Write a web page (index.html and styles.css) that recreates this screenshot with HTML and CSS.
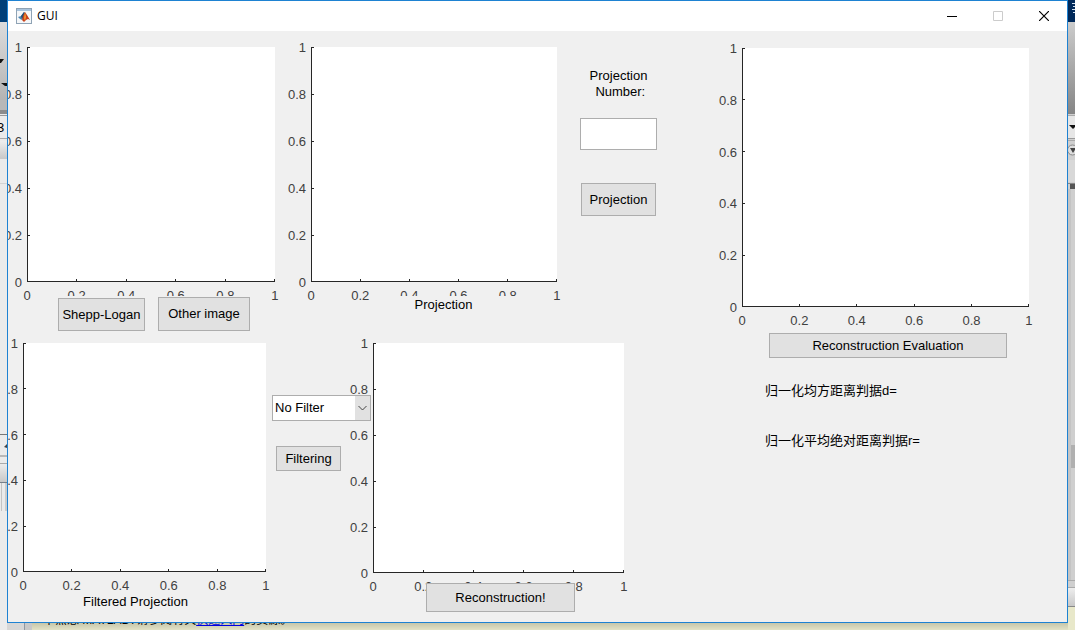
FILE: index.html
```html
<!DOCTYPE html>
<html lang="en">
<head>
<meta charset="utf-8">
<title>GUI</title>
<link rel="stylesheet" href="styles.css">
</head>
<body>
<div class="desktop">
  <svg class="edge" viewBox="0 0 7 630" preserveAspectRatio="xMinYMin slice" aria-hidden="true">
    <defs>
      <linearGradient id="lg" x1="0" y1="0" x2="0" y2="1"><stop offset="0" stop-color="#dcdcdc"/><stop offset="1" stop-color="#b4b4b4"/></linearGradient>
      <linearGradient id="lg2" x1="0" y1="0" x2="0" y2="1"><stop offset="0" stop-color="#eeeeee"/><stop offset="1" stop-color="#c8c8c8"/></linearGradient>
    </defs>
    <rect width="7" height="630" fill="#ebebeb"/>
    <rect width="7" height="22" fill="#003f78"/>
    <rect y="22" width="7" height="78" fill="url(#lg)"/>
    <path d="M0 59h4l-3 4h-1zM1 83h6v3h-2z" fill="#111"/>
    <rect y="100" width="7" height="10" fill="#b8b8b8"/>
    <rect y="110" width="7" height="4" fill="#8c8c8c"/>
    <rect y="115" width="7" height="1" fill="#999"/>
    <text x="-3" y="132" class="edge-text">3</text>
    <rect y="138" width="7" height="1" fill="#aaa"/>
    <rect y="141" width="7" height="18" fill="url(#lg2)"/>
    <rect y="183" width="7" height="1" fill="#d4d4d4"/>
    <rect y="434" width="7" height="1" fill="#777"/>
    <path d="M4 447l3-3v4z" fill="#444"/>
    <rect y="455" width="7" height="2" fill="#b8b8b8"/>
    <rect y="463" width="7" height="19" fill="url(#lg2)"/>
    <rect y="463" width="7" height="1" fill="#aaa"/>
    <rect y="482" width="7" height="1" fill="#777f88"/>
    <rect x="1" y="483" width="1" height="28" fill="#c4c4c4"/>
    <rect x="5" y="483" width="2" height="28" fill="#ccc"/>
  </svg>

  <main class="window">
    <header class="titlebar">
      <svg class="logo" width="16" height="16" viewBox="0 0 16 16" aria-hidden="true">
        <rect x=".5" y=".5" width="15" height="15" fill="#f5f7f9" stroke="#8fa3b5"/>
        <rect x="1" y="1" width="14" height="2" fill="#a9c4dd"/>
        <path d="M2 9l3-1 3-4 1 2-3 6-2-1z" fill="#4b86b4"/>
        <path d="M5 8l3-4 1 1-2 5-1 1z" fill="#254d72"/>
        <path d="M6 12l1-4 2-4 2 3 3 5-2-1-2 1-2 2z" fill="#c8401c"/>
        <path d="M9 4l1 5-1 4-1-3z" fill="#f09a32"/>
      </svg>
      <h1 class="title">GUI</h1>
      <button class="caption" aria-label="Minimize"><svg width="10" height="10"><path d="M0 5.5h10" stroke="#000"/></svg></button>
      <button class="caption" aria-label="Maximize" disabled><svg width="10" height="10"><path d="M.5.5h9v9h-9z" fill="none" stroke="#ccc"/></svg></button>
      <button class="caption" aria-label="Close"><svg width="10" height="10"><path d="M0 0l10 10M10 0L0 10" stroke="#000" stroke-width="1.2"/></svg></button>
    </header>

    <div class="content">
      <div class="workspace">
        <section class="row row-source">
          <div class="panel panel-image">
            <div class="axes">
              <svg class="frame" width="100%" height="100%"><use href="#ticks"/></svg>
              <div class="y-labels"><span>1</span><span>0.8</span><span>0.6</span><span>0.4</span><span>0.2</span><span>0</span></div>
              <div class="x-labels"><span>0</span><span>0.2</span><span>0.4</span><span>0.6</span><span>0.8</span><span>1</span></div>
            </div>
            <div class="under">
              <div class="image-buttons">
                <button class="btn shepp">Shepp-Logan</button>
                <button class="btn other">Other image</button>
              </div>
            </div>
          </div>
          <div class="panel panel-projection">
            <div class="axes">
              <svg class="frame" width="100%" height="100%"><use href="#ticks"/></svg>
              <div class="y-labels"><span>1</span><span>0.8</span><span>0.6</span><span>0.4</span><span>0.2</span><span>0</span></div>
              <div class="x-labels"><span>0</span><span>0.2</span><span>0.4</span><span>0.6</span><span>0.8</span><span>1</span></div>
            </div>
            <div class="under"><p class="caption-text projection-caption">Projection</p></div>
          </div>
          <div class="number-form">
            <label for="count">Projection<br>&nbsp;Number:</label>
            <input id="count" type="text">
            <button class="btn project">Projection</button>
          </div>
        </section>

        <section class="row row-filter">
          <div class="panel panel-filtered">
            <div class="axes">
              <svg class="frame" width="100%" height="100%"><use href="#ticks"/></svg>
              <div class="y-labels"><span>1</span><span>0.8</span><span>0.6</span><span>0.4</span><span>0.2</span><span>0</span></div>
              <div class="x-labels"><span>0</span><span>0.2</span><span>0.4</span><span>0.6</span><span>0.8</span><span>1</span></div>
            </div>
            <div class="under under-filtered"><p class="caption-text filtered-caption">Filtered Projection</p></div>
          </div>
          <div class="filter-form">
            <div class="select-box">
              <select aria-label="Filter"><option>No Filter</option></select>
              <svg class="chevron" width="15" height="24" aria-hidden="true"><path d="M3.5 10l4 4 4-4" fill="none" stroke="#444"/></svg>
            </div>
            <button class="btn filtering">Filtering</button>
          </div>
          <div class="panel panel-recon">
            <div class="axes">
              <svg class="frame" width="100%" height="100%"><use href="#ticks"/></svg>
              <div class="y-labels"><span>1</span><span>0.8</span><span>0.6</span><span>0.4</span><span>0.2</span><span>0</span></div>
              <div class="x-labels"><span>0</span><span>0.2</span><span>0.4</span><span>0.6</span><span>0.8</span><span>1</span></div>
            </div>
            <div class="under under-recon"><button class="btn recon">Reconstruction!</button></div>
          </div>
        </section>
      </div>

      <section class="evaluation">
        <div class="axes">
          <svg class="frame" width="100%" height="100%">
            <g id="ticks" stroke="#262626" stroke-width="2" shape-rendering="crispEdges">
              <path d="M0 0v2000"/>
              <line x1="0" x2="100%" y1="100%" y2="100%"/>
              <path d="M0 0h3"/>
              <line x1="0" x2="3" y1="20%" y2="20%" stroke-width="1"/>
              <line x1="0" x2="3" y1="40%" y2="40%" stroke-width="1"/>
              <line x1="0" x2="3" y1="60%" y2="60%" stroke-width="1"/>
              <line x1="0" x2="3" y1="80%" y2="80%" stroke-width="1"/>
              <svg y="100%" width="100%" height="3" overflow="visible">
                <line x1="20%" x2="20%" y1="-3" y2="0" stroke-width="1"/>
                <line x1="40%" x2="40%" y1="-3" y2="0" stroke-width="1"/>
                <line x1="60%" x2="60%" y1="-3" y2="0" stroke-width="1"/>
                <line x1="80%" x2="80%" y1="-3" y2="0" stroke-width="1"/>
                <line x1="100%" x2="100%" y1="-3" y2="0"/>
              </svg>
            </g>
          </svg>
          <div class="y-labels"><span>1</span><span>0.8</span><span>0.6</span><span>0.4</span><span>0.2</span><span>0</span></div>
          <div class="x-labels"><span>0</span><span>0.2</span><span>0.4</span><span>0.6</span><span>0.8</span><span>1</span></div>
        </div>
        <button class="btn evaluate">Reconstruction Evaluation</button>
        <p class="metric" lang="zh">归一化均方距离判据d=</p>
        <p class="metric" lang="zh">归一化平均绝对距离判据r=</p>
      </section>
    </div>
  </main>

  <div class="notice" lang="zh"><p>不熟悉 MATLAB?请参阅有关<a href="#start">快速入门</a>的资源。</p></div>

  <svg class="edge" viewBox="0 0 7 630" preserveAspectRatio="xMinYMin slice" aria-hidden="true">
    <defs>
      <linearGradient id="rg" x1="0" y1="0" x2="0" y2="1"><stop offset="0" stop-color="#cccccc"/><stop offset="1" stop-color="#858585"/></linearGradient>
    </defs>
    <rect width="7" height="630" fill="#cfcfcf"/>
    <rect width="7" height="22" fill="#00295a"/>
    <path d="M4 3.500h3M5 6.500h2M4 9.500h3M5 12.500h2" stroke="#cfdff0"/>
    <rect y="22" width="7" height="92" fill="url(#rg)"/>
    <rect y="115" width="7" height="1" fill="#aaa"/>
    <rect y="116" width="7" height="22" fill="#e6e6e6"/>
    <path d="M1 125h6v2l-2 2z" fill="#111"/>
    <rect y="138" width="7" height="1" fill="#999"/>
    <rect y="140" width="7" height="1" fill="#aaa"/>
    <circle cx="4.500" cy="150" r="5" fill="#ddd" stroke="#888"/>
    <path d="M2 148h6l-3 5z" fill="#444"/>
    <rect y="160" width="7" height="22" fill="#d8d8d8"/>
    <rect y="183" width="7" height="1" fill="#888"/>
    <rect x="2" y="184" width="5" height="5" fill="#555"/>
    <rect y="189" width="3" height="391" fill="#c4c4c4"/>
    <rect x="3" y="445" width="4" height="23" fill="#b0b0b0"/>
    <rect y="580" width="7" height="1" fill="#aaa"/>
    <rect y="587" width="7" height="1" fill="#aaa"/>
    <rect y="588" width="7" height="18" fill="url(#lg2)"/>
    <rect y="606" width="7" height="1" fill="#888"/>
    <rect y="607" width="7" height="23" fill="#e8e8ca"/>
  </svg>
</div>
</body>
</html>
```

FILE: styles.css
```css
* {
  box-sizing: border-box;
}

body {
  margin: 0;
  font: 13px/16px "Liberation Sans", "Noto Sans CJK SC", sans-serif;
  color: #000;
}

h1, p {
  margin: 0;
  font-weight: normal;
}

button, input, select {
  font: inherit;
  color: inherit;
}

/* Desktop behind the window */
.desktop {
  display: grid;
  grid-template-columns: 7px minmax(0, 1fr) 7px;
  grid-template-rows: 1fr 7px;
  min-height: 100vh;
}

.edge {
  display: block;
  width: 7px;
  height: 100%;
  grid-row: 1 / 3;
}

.edge:first-child {
  grid-column: 1;
}

.edge:last-child {
  grid-column: 3;
}

.edge-text {
  font-size: 13px;
}

.notice {
  grid-column: 2;
  grid-row: 2;
  display: flex;
  align-items: flex-end;
  height: 7px;
  padding: 0 0 2px 36px;
  overflow: hidden;
  font-size: 12px;
  background:
    linear-gradient(90deg, #d6d6d6 17px, #8f98a3 17px, #8f98a3 18px, #c8c8c8 18px, #c8c8c8 25px, transparent 25px),
    linear-gradient(#c6c6aa, #e2e2c6);
}

.notice a {
  color: #0000e0;
}

/* Window */
.window {
  grid-column: 2;
  grid-row: 1;
  display: flex;
  flex-direction: column;
  overflow: hidden;
  border: 1px solid #1e82d2;
  background: #f0f0f0;
}

.titlebar {
  display: flex;
  align-items: center;
  height: 30px;
  padding-left: 8px;
  background: #fff;
}

.title {
  flex: 1;
  margin-left: 5px;
  font: 12px/16px "Open Sans", sans-serif;
}

.caption {
  display: grid;
  place-items: center;
  width: 46px;
  height: 28px;
  padding: 0;
  border: 0;
  background: none;
}

.content {
  flex: 1;
  display: grid;
  grid-template-columns: 649fr 287fr;
  column-gap: 85px;
  padding: 16px 38px 0 0;
}

.workspace {
  display: grid;
  grid-template-rows: 296fr 279fr;
}

.row {
  display: flex;
}

.row-source {
  padding-left: 19px;
}

.row-filter {
  padding: 0 33px 0 15px;
}

.panel {
  display: flex;
  flex-direction: column;
  min-width: 0;
}

.panel-image {
  flex: 248;
  margin-right: 36px;
}

.panel-projection {
  flex: 246;
  margin-right: 23px;
}

.panel-filtered {
  flex: 243;
  margin-right: 6px;
}

.panel-recon {
  flex: 251;
  margin-left: 2px;
}

/* Axes: labels are zero-sized flex items centred on their ticks */
.axes {
  flex: 1;
  display: grid;
  grid-template: minmax(0, 1fr) 0 / 0 minmax(0, 1fr);
  color: #404040;
}

.frame {
  grid-area: 1 / 2;
  display: block;
  min-height: 0;
  background: #fff;
}

.y-labels, .x-labels {
  display: flex;
  justify-content: space-between;
}

.y-labels {
  grid-area: 1 / 1;
  flex-direction: column;
  align-items: flex-end;
  margin: 1px 0 -1px -5px;
  padding-right: 5px;
}

.x-labels {
  grid-area: 2 / 2;
  padding-top: 14px;
}

.y-labels span, .x-labels span {
  display: flex;
  align-items: center;
  height: 0;
}

.x-labels span {
  justify-content: center;
  width: 0;
}

.y-labels span {
  justify-content: flex-end;
  width: 0;
}

/* Captions and buttons under the axes */
.under {
  position: relative;
  height: 61px;
  padding-top: 14px;
}

.under-filtered {
  height: 50px;
  padding-top: 22px;
}

.under-recon {
  height: 49px;
  padding-top: 10px;
}

.image-buttons {
  display: flex;
  align-items: flex-end;
  justify-content: space-between;
  margin: 0 25px 0 31px;
  padding-top: 1px;
  background: #f0f0f0;
}

.caption-text {
  text-align: center;
  background: #f0f0f0;
}

.projection-caption {
  margin: 0 40px 0 59px;
  padding-top: 1px;
}

.filtered-caption {
  margin-right: 18px;
}

.btn {
  padding: 0;
  border: 1px solid #adadad;
  border-radius: 0;
  background: #e1e1e1;
  white-space: nowrap;
}

.shepp {
  width: 87px;
  height: 33px;
}

.other {
  width: 92px;
  height: 34px;
}

.recon {
  display: block;
  width: 149px;
  height: 29px;
  margin-left: 53px;
}

/* Projection count */
.number-form {
  display: flex;
  flex-direction: column;
  align-items: center;
  width: 77px;
  padding-top: 21px;
  text-align: center;
}

.number-form input {
  width: 100%;
  height: 32px;
  margin: 18px 0 33px;
  border: 1px solid #adadad;
  background: #fff;
}

.project {
  width: 75px;
  height: 33px;
}

/* Filter choice */
.filter-form {
  position: relative;
  z-index: 1;
  width: 99px;
  padding-top: 52px;
}

.select-box {
  display: grid;
  height: 26px;
  margin-bottom: 25px;
  border: 1px solid #adadad;
  background: #fff;
}

.select-box select {
  grid-area: 1 / 1;
  width: 100%;
  padding: 0 2px;
  border: 0;
  background: none;
  appearance: none;
}

.chevron {
  grid-area: 1 / 1;
  justify-self: end;
  background: #e1e1e1;
  pointer-events: none;
}

.filtering {
  width: 65px;
  height: 25px;
  margin-left: 4px;
}

/* Evaluation column */
.evaluation {
  display: flex;
  flex-direction: column;
  padding-top: 1px;
}

.evaluation .axes {
  flex: none;
  aspect-ratio: 287 / 259;
}

.evaluate {
  height: 25px;
  margin: 26px 22px 25px 27px;
}

.metric {
  margin-left: 23px;
  margin-bottom: 34px;
  white-space: nowrap;
}
```
